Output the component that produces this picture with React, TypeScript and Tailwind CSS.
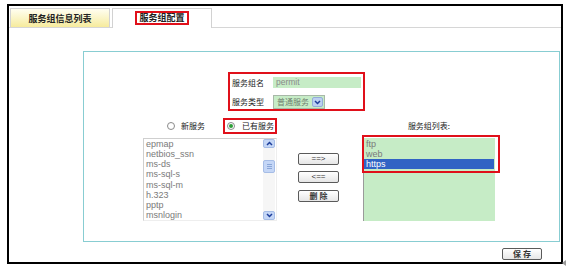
import React from "react";

const cjk = { fontFamily: '"Noto Sans CJK SC", "Liberation Sans", sans-serif' };
const lat = { fontFamily: '"Liberation Sans", "Noto Sans CJK SC", sans-serif' };

function Chevron({ up = false }: { up?: boolean }) {
  return (
    <svg width="7" height="5" viewBox="0 0 7 5">
      <path
        d={up ? "M1 4 L3.5 1.5 L6 4" : "M1 1 L3.5 3.5 L6 1"}
        fill="none"
        stroke="#1d3e9a"
        strokeWidth="1.5"
      />
    </svg>
  );
}

function Radio({ checked = false }: { checked?: boolean }) {
  return (
    <div className="w-[8px] h-[8px] rounded-full border border-[#8a8a8a] bg-white flex items-center justify-center shrink-0">
      {checked && <div className="w-[4px] h-[4px] rounded-full bg-[#2e9e3a]" />}
    </div>
  );
}

function Btn({ children, bold = false, cn = "" }: { children: React.ReactNode; bold?: boolean; cn?: string }) {
  return (
    <div
      className={`w-[41px] h-[12px] rounded-[2px] border border-[#5a5a5a] bg-gradient-to-b from-white to-[#e6e6e6] flex items-center justify-center text-[8px] leading-none text-[#333] whitespace-nowrap ${bold ? "font-bold" : ""} ${cn}`}
      style={cjk}
    >
      {children}
    </div>
  );
}

const services = ["epmap", "netbios_ssn", "ms-ds", "ms-sql-s", "ms-sql-m", "h.323", "pptp", "msnlogin"];

export default function App() {
  return (
    <div className="w-[566px] h-[271px] bg-white pt-[4px] pl-[7px] relative">
      <div className="w-[556px] h-[260px] border-2 border-black flex flex-col">
        {/* tabs */}
        <div className="mt-[2px] pl-[1px] h-[20px] flex items-end border-b border-[#d6d6d6]">
          <div
            className="w-[100px] h-[19px] border border-b-0 border-[#d2d2d2] bg-gradient-to-b from-[#fffef0] to-[#f6eb9c] flex items-center justify-center text-[9px] font-bold text-[#222] leading-none whitespace-nowrap"
            style={cjk}
          >
            服务组信息列表
          </div>
          <div className="ml-[2px] w-[100px] h-[20px] mb-[-1px] border border-b-0 border-[#d2d2d2] bg-white flex items-start justify-center pt-[2px]">
            <div
              className="border-2 border-[#e0101a] h-[14px] w-[54px] flex items-center justify-center text-[9px] font-bold text-[#222] leading-[10px] whitespace-nowrap"
              style={cjk}
            >
              服务组配置
            </div>
          </div>
        </div>

        {/* panel */}
        <div className="mt-[23px] ml-[74px] w-[477px] h-[191px] border border-[#88cdd2] flex flex-col">
          {/* form box */}
          <div className="mt-[20px] ml-[144px] w-[137px] h-[39px] border-2 border-[#e0101a] flex flex-col pl-[2px]">
            <div className="mt-[3px] h-[11px] flex items-center">
              <div className="w-[41px] text-[8px] leading-none text-[#222] whitespace-nowrap" style={cjk}>
                服务组名
              </div>
              <div className="w-[88px] h-[11px] bg-[#c6ecc6] flex items-center pl-[3px] text-[8.5px] text-[#8a8a8a] leading-none" style={lat}>
                permit
              </div>
            </div>
            <div className="mt-[7px] h-[14px] flex items-center">
              <div className="w-[41px] text-[8px] leading-none text-[#222] whitespace-nowrap" style={cjk}>
                服务类型
              </div>
              <div className="w-[52px] h-[14px] bg-[#c6ecc6] border border-[#a8b8a8] flex items-center justify-between pl-[3px] pr-[1px]">
                <span className="text-[8px] leading-none text-[#6f7f6f] whitespace-nowrap" style={cjk}>
                  普通服务
                </span>
                <div className="w-[11px] h-[10px] shrink-0 rounded-[2px] bg-[#bcd0f2] border border-[#94acd8] flex items-center justify-center">
                  <Chevron />
                </div>
              </div>
            </div>
          </div>

          {/* lower */}
          <div className="mt-[7px] flex items-start">
            {/* left column */}
            <div className="ml-[59px] w-[134px] flex flex-col">
              <div className="h-[16px] flex items-center">
                <div className="w-[82px] h-[16px] flex items-center pl-[24px]">
                  <Radio />
                  <span className="ml-[6px] text-[8px] leading-none text-[#222] whitespace-nowrap" style={cjk}>
                    新服务
                  </span>
                </div>
                <div className="w-[54px] h-[16px] shrink-0 border-2 border-[#e0101a] flex items-center pl-[2px]">
                  <Radio checked />
                  <span className="ml-[7px] text-[8px] leading-none text-[#222] whitespace-nowrap" style={cjk}>
                    已有服务
                  </span>
                </div>
              </div>
              <div className="mt-[4px] w-[134px] h-[83px] border border-[#cfcfcf] border-r-[#eeeeee] border-b-[#eeeeee] bg-white flex">
                <div className="flex-1 pl-[2px] pt-[0px] text-[9px] leading-[10.15px] text-[#7a7a7a]" style={lat}>
                  {services.map((s) => (
                    <div key={s}>{s}</div>
                  ))}
                </div>
                <div className="w-[12px] mr-[1px] flex flex-col bg-[#f6f6f6]">
                  <div className="h-[9px] rounded-[2px] bg-[#c4d6f6] border border-[#a6bde6] flex items-center justify-center">
                    <Chevron up />
                  </div>
                  <div className="mt-[12px] h-[13px] rounded-[2px] bg-[#c4d6f6] border border-[#a6bde6] flex flex-col items-center justify-center gap-[1px]">
                    <div className="w-[5px] h-[1px] bg-[#8aa6d8]" />
                    <div className="w-[5px] h-[1px] bg-[#8aa6d8]" />
                    <div className="w-[5px] h-[1px] bg-[#8aa6d8]" />
                  </div>
                  <div className="mt-[38px] h-[9px] rounded-[2px] bg-[#c4d6f6] border border-[#a6bde6] flex items-center justify-center">
                    <Chevron />
                  </div>
                </div>
              </div>
            </div>

            {/* buttons */}
            <div className="ml-[21px] mt-[35px] flex flex-col">
              <Btn>
                <span style={lat}>==&gt;</span>
              </Btn>
              <Btn cn="mt-[6px]">
                <span style={lat}>&lt;==</span>
              </Btn>
              <Btn bold cn="mt-[7px]">
                删 除
              </Btn>
            </div>

            {/* right column */}
            <div className="ml-[24px] w-[132px] flex flex-col">
              <div className="mt-[2px] h-[12px] flex items-center justify-center text-[8px] leading-none text-[#222] whitespace-nowrap" style={cjk}>
                服务组列表:
              </div>
              <div className="mt-[6px] relative w-[132px] h-[83px] bg-[#c6ecc6] border-l border-[#9a9a9a] pt-[1px] text-[9px] leading-[10px] text-[#7a7a7a]" style={lat}>
                <div className="pl-[2px]">ftp</div>
                <div className="pl-[2px]">web</div>
                <div className="pl-[2px] mr-[1px] bg-[#3163c4] text-white">https</div>
                <div className="absolute top-[-3px] left-[-2px] w-[138px] h-[38px] border-2 border-[#e0101a]" />
              </div>
            </div>
          </div>
        </div>

        {/* save */}
        <div className="mt-[6px] ml-[493px]">
          <div
            className="w-[40px] h-[12px] rounded-[2px] border border-[#5a5a5a] bg-gradient-to-b from-white to-[#e6e6e6] flex items-center justify-center text-[8px] font-bold leading-none text-[#333] whitespace-nowrap"
            style={cjk}
          >
            保 存
          </div>
        </div>
      </div>
      <svg className="absolute left-[562px] top-[260px]" width="4" height="6" viewBox="0 0 4 6">
        <path d="M4 0 L0 3 L4 6 Z" fill="#9a9a9a" />
      </svg>
    </div>
  );
}
